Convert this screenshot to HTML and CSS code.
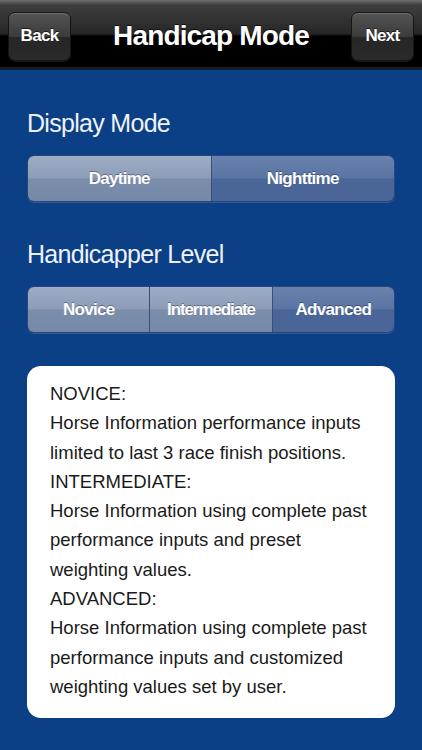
FILE: index.html
```html
<!DOCTYPE html>
<html>
<head>
<meta charset="utf-8">
<link rel="stylesheet" href="styles.css">
</head>
<body>
<div class="screen">
  <header class="navbar">
    <div class="nav-btn">Back</div>
    <h1 class="nav-title">Handicap Mode</h1>
    <div class="nav-btn">Next</div>
  </header>
  <main class="content">
    <h2 class="section-title">Display Mode</h2>
    <div class="segmented">
      <div class="seg">Daytime</div>
      <div class="seg selected">Nighttime</div>
    </div>
    <h2 class="section-title second">Handicapper Level</h2>
    <div class="segmented">
      <div class="seg">Novice</div>
      <div class="seg tight">Intermediate</div>
      <div class="seg selected">Advanced</div>
    </div>
    <div class="info">
      <p>NOVICE:</p>
      <p>Horse Information performance inputs limited to last 3 race finish positions.</p>
      <p>INTERMEDIATE:</p>
      <p>Horse Information using complete past performance inputs and preset weighting values.</p>
      <p>ADVANCED:</p>
      <p>Horse Information using complete past performance inputs and customized weighting values set by user.</p>
    </div>
  </main>
</div>
</body>
</html>
```

FILE: styles.css
```css
* { box-sizing: border-box; }
html, body { margin: 0; padding: 0; }
body {
  width: 422px;
  height: 750px;
  overflow: hidden;
  background: #0b3f86;
  font-family: "Liberation Sans", Arial, sans-serif;
}
.screen {
  display: flex;
  flex-direction: column;
  height: 750px;
}
.navbar {
  height: 70px;
  flex: none;
  display: flex;
  align-items: center;
  justify-content: space-between;
  padding: 0 8px;
  background: linear-gradient(to bottom, #6e6e6e 0px, #3e3e3e 5px, #262626 34px, #000 36px, #000 66px, #1c1c1c 68px, #0a1f44 70px);
}
.nav-btn {
  width: 63px;
  height: 49px;
  border-radius: 7px;
  border: 1px solid #151515;
  background: linear-gradient(to bottom, #545454 0%, #3b3b3b 50%, #262626 52%, #2a2a2a 100%);
  box-shadow: inset 0 1px 0 rgba(255,255,255,0.18), 0 1px 0 rgba(255,255,255,0.08);
  color: #fff;
  font-weight: bold;
  font-size: 17px;
  letter-spacing: -0.7px;
  display: flex;
  align-items: center;
  justify-content: center;
  text-shadow: 0 -1px 0 rgba(0,0,0,0.6);
  margin-top: 2px;
}
.nav-title {
  margin: 0;
  color: #fff;
  font-size: 28px;
  letter-spacing: -0.85px;
  font-weight: bold;
  text-shadow: 0 -1px 0 rgba(0,0,0,0.7);
  margin-top: 1px;
}
.content {
  padding: 0 27px;
  display: flex;
  flex-direction: column;
}
.section-title {
  margin: 0;
  color: #eef2f8;
  font-weight: normal;
  font-size: 25px;
  letter-spacing: -0.7px;
  line-height: 30px;
  margin-top: 38px;
  margin-bottom: 17px;
}
.section-title.second {
  margin-top: 37px;
  margin-bottom: 17px;
}
.segmented {
  display: flex;
  height: 47px;
  border-radius: 7px;
  overflow: hidden;
  border: 1px solid #2c4575;
  box-shadow: 0 1px 0 rgba(255,255,255,0.15);
}
.seg {
  flex: 1;
  display: flex;
  align-items: center;
  justify-content: center;
  color: #fff;
  font-weight: bold;
  font-size: 17px;
  letter-spacing: -0.7px;
  text-shadow: 0 -1px 0 rgba(0,0,0,0.35);
  background: linear-gradient(to bottom, #9dadc5 0%, #8d9db8 48%, #7a8dab 52%, #7689a8 100%);
  border-left: 1px solid #3a5078;
}
.seg.tight { letter-spacing: -1.1px; }
.seg:first-child { border-left: none; }
.seg.selected {
  background: linear-gradient(to bottom, #6982ad 0%, #5a75a3 48%, #4a6698 52%, #4a6597 100%);
}
.info {
  margin-top: 33px;
  background: #fff;
  border-radius: 14px;
  padding: 13px 20px 16px 23px;
  height: 352px;
  color: #1a1a1a;
  font-size: 18.5px;
  line-height: 29.3px;
}
.info p { margin: 0; }
```
